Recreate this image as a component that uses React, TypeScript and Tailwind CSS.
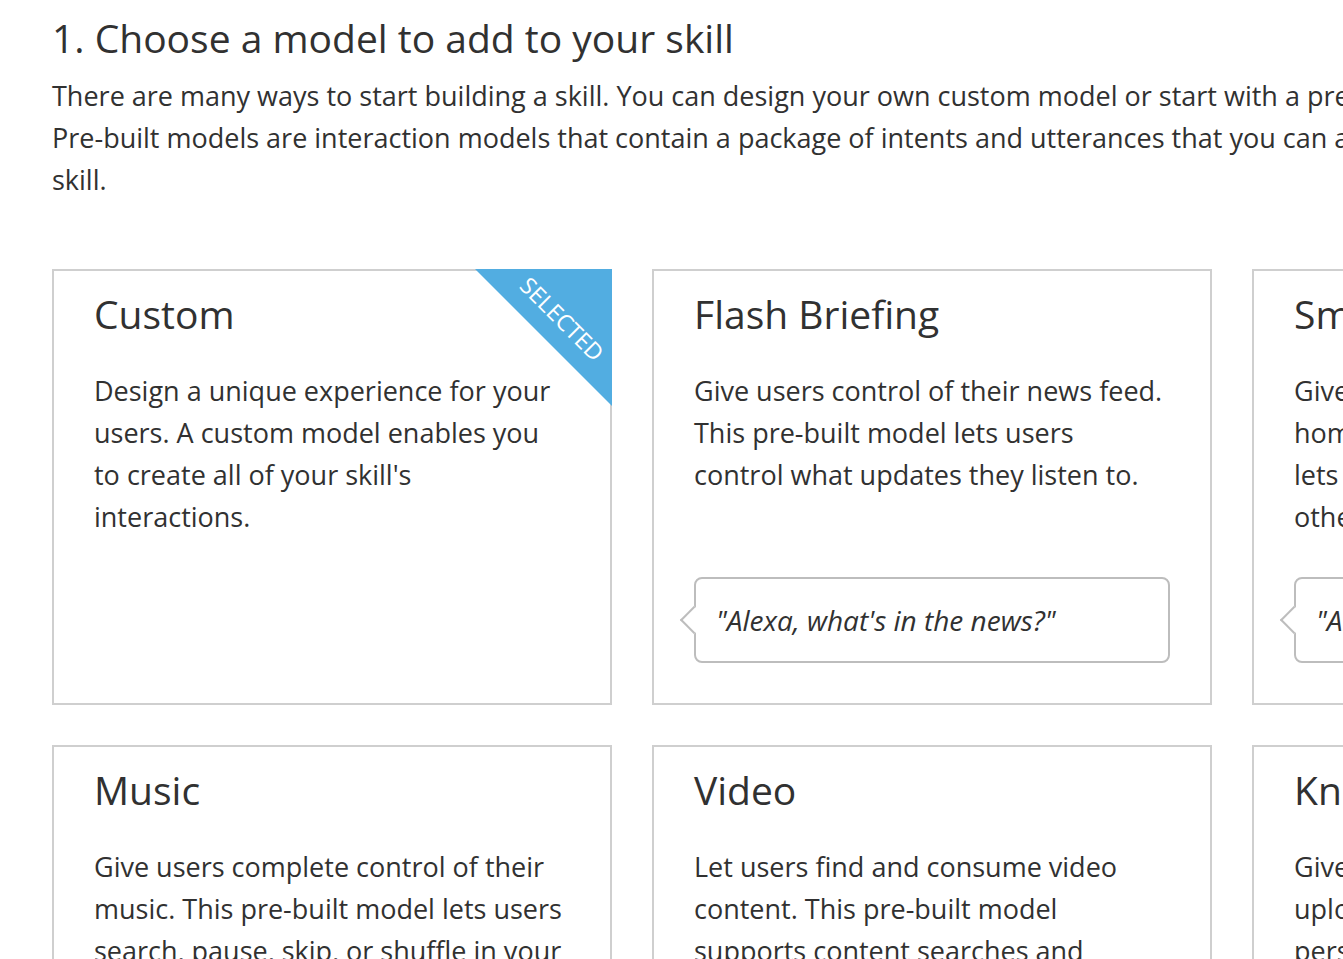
import React from "react";

type Model = {
  id: number;
  title: string;
  lines: string[];
  quote?: string;
  selected?: boolean;
};

const models: Model[] = [
  {
    id: 1,
    title: "Custom",
    lines: ["Design a unique experience for your", "users. A custom model enables you", "to create all of your skill's", "interactions."],
    selected: true,
  },
  {
    id: 2,
    title: "Flash Briefing",
    lines: ["Give users control of their news feed.", "This pre-built model lets users", "control what updates they listen to."],
    quote: '"Alexa, what\'s in the news?"',
  },
  {
    id: 3,
    title: "Smart Home",
    lines: ["Give users control of their smart", "home devices. This pre-built model", "lets users turn off the lights and", "other devices without getting up."],
    quote: '"Alexa, turn on the lights."',
  },
  {
    id: 4,
    title: "Music",
    lines: ["Give users complete control of their", "music. This pre-built model lets users", "search, pause, skip, or shuffle in your", "music service."],
  },
  {
    id: 5,
    title: "Video",
    lines: ["Let users find and consume video", "content. This pre-built model", "supports content searches and", "content playback."],
  },
  {
    id: 6,
    title: "Knowledge",
    lines: ["Give users answers from your", "uploaded content, with", "personalized responses."],
  },
];

function ModelCard({ model }: { model: Model }) {
  return (
    <div className="relative flex h-[436px] w-[560px] flex-col border-2 border-[#cfcfcf] bg-white px-10 pb-10 pt-[19px]">
      {model.selected && (
        <div className="absolute -right-[2px] -top-[2px] h-[137px] w-[137px] overflow-hidden">
          <div className="absolute inset-0 bg-[#52ade1] [clip-path:polygon(0_0,100%_0,100%_100%)]" />
          <span className="absolute left-[87px] top-[50px] -translate-x-1/2 -translate-y-1/2 rotate-45 whitespace-nowrap text-[23px] leading-none text-white">
            SELECTED
          </span>
        </div>
      )}
      <h2 className="whitespace-nowrap text-[39px] leading-[48px] text-[#313131]">{model.title}</h2>
      <p className="mt-[32px] whitespace-nowrap text-[27px] leading-[42px] text-[#313131]">
        {model.lines.map((l, i) => (
          <span key={i} className="block">{l}</span>
        ))}
      </p>
      {model.quote && (
        <div className="relative mt-auto flex h-[86px] items-center rounded-lg border-2 border-[#bdbdbd] bg-white px-5">
          <div className="absolute -left-[12px] top-[31px] h-5 w-5 rotate-45 border-b-2 border-l-2 border-[#bdbdbd] bg-white" />
          <span className="relative whitespace-nowrap text-[28px] italic text-[#313131]">{model.quote}</span>
        </div>
      )}
    </div>
  );
}

export default function App() {
  return (
    <div className="h-[959px] w-full overflow-hidden bg-white pl-[52px] pt-[14px] font-['Open_Sans',sans-serif] text-[#313131]">
      <h1 className="whitespace-nowrap text-[39px] leading-[48px]">1. Choose a model to add to your skill</h1>
      <p className="mt-[13px] whitespace-nowrap text-[27px] leading-[42px]">
        <span className="block">There are many ways to start building a skill. You can design your own custom model or start with a pre-built model.</span>
        <span className="block">Pre-built models are interaction models that contain a package of intents and utterances that you can add to your</span>
        <span className="block">skill.</span>
      </p>
      <div className="mt-[68px] grid grid-cols-[repeat(3,560px)] gap-10">
        {models.map((m) => (
          <ModelCard key={m.id} model={m} />
        ))}
      </div>
    </div>
  );
}
